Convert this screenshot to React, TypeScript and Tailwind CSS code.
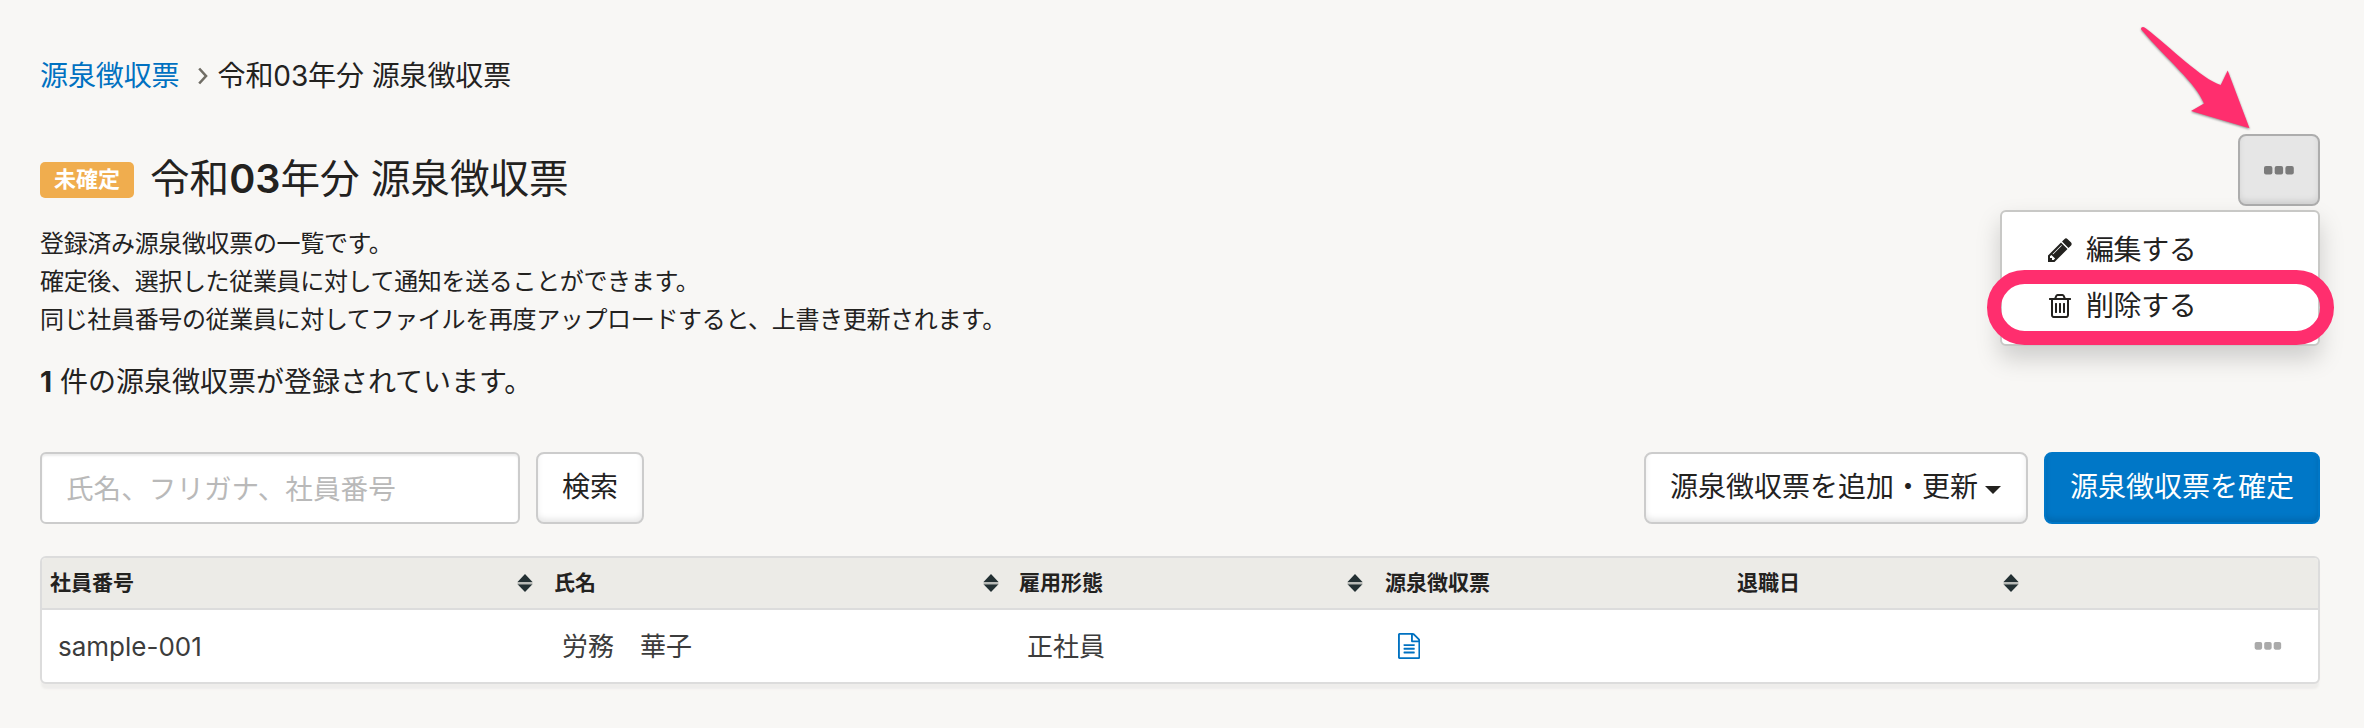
import React from "react";

function Dots({ className }: { className: string }) {
  return (
    <svg viewBox="0 0 30 9" className={className} fill="currentColor" aria-hidden="true">
      <rect x="0" y="0" width="8.4" height="8.6" rx="2" />
      <rect x="10.7" y="0" width="8.4" height="8.6" rx="2" />
      <rect x="21.4" y="0" width="8.4" height="8.6" rx="2" />
    </svg>
  );
}

function PencilIcon() {
  return (
    <svg viewBox="0 128 1536 1536" className="h-6 w-6" fill="currentColor" aria-hidden="true">
      <path d="M363 1536l91-91-235-235-91 91v107h128v128h107zm523-928q0-22-22-22-10 0-17 7L305 1135q-7 7-7 17 0 22 22 22 10 0 17-7l542-542q7-7 7-17zM832 416l416 416-832 832H0v-416zm683 96q0 53-37 90l-166 166-416-416 166-165q36-38 90-38 53 0 91 38l235 234q37 39 37 91z" />
    </svg>
  );
}

function TrashIcon() {
  return (
    <svg viewBox="-64 128 1536 1536" className="h-6 w-6" fill="currentColor" aria-hidden="true">
      <path d="M512 736v576q0 14-9 23t-23 9h-64q-14 0-23-9t-9-23V736q0-14 9-23t23-9h64q14 0 23 9t9 23zm256 0v576q0 14-9 23t-23 9h-64q-14 0-23-9t-9-23V736q0-14 9-23t23-9h64q14 0 23 9t9 23zm256 0v576q0 14-9 23t-23 9h-64q-14 0-23-9t-9-23V736q0-14 9-23t23-9h64q14 0 23 9t9 23zm128 724V512H256v948q0 22 7 40.500t14.500 27 10.500 8.500h832q3 0 10.500-8.500t14.500-27 7-40.500zM480 384h448l-48-117q-7-9-17-11H546q-10 2-17 11zm928 32v64q0 14-9 23t-23 9h-96v948q0 83-47 143.500t-113 60.500H288q-66 0-113-58.500T128 1464V512H32q-14 0-23-9t-9-23v-64q0-14 9-23t23-9h309l70-167q15-37 54-63t79-26h320q40 0 79 26t54 63l70 167h309q14 0 23 9t9 23z" />
    </svg>
  );
}

function FileIcon() {
  return (
    <svg viewBox="0 0 1536 1792" className="h-[26px] w-[22.3px]" fill="currentColor" aria-hidden="true">
      <path d="M1468 380q28 28 48 76t20 88v1152q0 40-28 68t-68 28H96q-40 0-68-28t-28-68V96q0-40 28-68T96 0h896q40 0 88 20t76 48zm-444-244v376h376q-10-29-22-41l-313-313q-12-12-41-22zm384 1528V640H992q-40 0-68-28t-28-68V128H128v1536h1280zM384 800q0-14 9-23t23-9h704q14 0 23 9t9 23v64q0 14-9 23t-23 9H416q-14 0-23-9t-9-23v-64zm736 224q14 0 23 9t9 23v64q0 14-9 23t-23 9H416q-14 0-23-9t-9-23v-64q0-14 9-23t23-9h704zm0 256q14 0 23 9t9 23v64q0 14-9 23t-23 9H416q-14 0-23-9t-9-23v-64q0-14 9-23t23-9h704z" />
    </svg>
  );
}

function SortIcon() {
  return (
    <svg viewBox="0 0 16 18" className="h-[18px] w-4" aria-hidden="true">
      <path d="M8 0L15.500 8H0.500z" fill="#233033" />
      <path d="M8 18L15.500 10.200H0.500z" fill="#233033" />
      <rect x="0.500" y="8" width="15" height="2.200" fill="#b9bbb8" />
    </svg>
  );
}

function HeaderCell({ label, className, sortable = true }: { label: string; className: string; sortable?: boolean }) {
  return (
    <div className={`flex shrink-0 items-center justify-between ${className}`}>
      <span>{label}</span>
      {sortable && <SortIcon />}
    </div>
  );
}

const buttonBase = "flex h-[72px] shrink-0 items-center rounded-[8px] border-2 pb-[2px] text-[28px]";

export default function App() {
  return (
    <div className="relative h-[728px] w-[2364px] overflow-hidden bg-[#f8f7f5] px-[40px] pt-[56px] font-['Inter','Noto_Sans_CJK_JP',sans-serif] font-normal text-[#23221f]">
      <nav className="flex h-10 items-center text-[28px] leading-10 tracking-[-0.1px] whitespace-nowrap">
        <a className="text-[#0071c1]">源泉徴収票</a>
        <svg viewBox="0 0 10 18" className="mr-[10px] ml-[18px] h-[18px] w-[10px]" fill="none" stroke="#706d65" strokeWidth="2.600">
          <path d="M1.200 1.500L8 9l-6.800 7.500" />
        </svg>
        <span>令和03年分 源泉徴収票</span>
      </nav>

      <header className="relative mt-[38px] flex h-[72px] w-[2280px] items-start justify-between">
        <div className="flex items-center pt-[25px]">
          <span className="mt-0.5 mr-4 flex h-9 w-[94px] items-center justify-center rounded-[5px] bg-[#f0ad4e] pb-px text-[22px] font-bold text-white">未確定</span>
          <h1 className="text-[39.6px] leading-10 font-normal whitespace-nowrap">
            令和<span className="font-semibold">03</span>年分 源泉徴収票
          </h1>
        </div>
        <button className="flex h-[72px] w-[82px] items-center justify-center rounded-[8px] border-2 border-[#adadad] bg-[#e6e6e6] text-[#7b7b7b] shadow-[inset_0_-4px_6px_-1px_rgba(0,0,0,0.1)]">
          <Dots className="h-[9px] w-[30px]" />
        </button>
        <div className="absolute top-[76px] right-0 z-10 h-[136px] w-[320px] rounded-[6px] border-2 border-[#c8c8c6] bg-white px-[46px] pt-[10px] text-[28px] tracking-[-0.4px] shadow-[0_12px_24px_rgba(0,0,0,0.175)]">
          <div className="flex h-14 items-center gap-[14px]">
            <PencilIcon />
            <span>編集する</span>
          </div>
          <div className="flex h-14 items-center gap-[14px]">
            <TrashIcon />
            <span>削除する</span>
          </div>
        </div>
      </header>

      <p className="mt-[19px] text-[24px] leading-[38px] tracking-[-0.34px]">
        登録済み源泉徴収票の一覧です。
        <br />
        確定後、選択した従業員に対して通知を送ることができます。
        <br />
        同じ社員番号の従業員に対してファイルを再度アップロードすると、上書き更新されます。
      </p>
      <p className="mt-[24px] text-[28px] leading-[38px]">
        <span className="font-bold">1</span> 件の源泉徴収票が登録されています。
      </p>

      <div className="mt-[51px] flex w-[2280px] items-center">
        <input
          className="h-[72px] w-[480px] rounded-[6px] border-2 border-[#ccc] bg-white px-[24px] pt-[2px] text-[27.6px] shadow-[inset_0_2px_2px_rgba(0,0,0,0.075)] outline-none placeholder:text-[#b9b9b9]"
          placeholder="氏名、フリガナ、社員番号"
        />
        <button className={`${buttonBase} ml-4 w-[108px] justify-center border-[#ccc] bg-white shadow-[inset_0_-4px_6px_-1px_rgba(0,0,0,0.1)]`}>検索</button>
        <button className={`${buttonBase} ml-auto w-[384px] border-[#ccc] bg-white pl-[24px] shadow-[inset_0_-4px_6px_-1px_rgba(0,0,0,0.1)]`}>
          源泉徴収票を追加・更新
          <svg viewBox="0 0 16 8" className="mt-[6px] ml-[7px] h-2 w-4" fill="currentColor">
            <path d="M0 0h16L8 8z" />
          </svg>
        </button>
        <button className={`${buttonBase} ml-4 w-[276px] justify-center border-[#0077c7] bg-[#0077c7] text-white shadow-[inset_0_-4px_6px_-1px_rgba(0,0,0,0.13)]`}>源泉徴収票を確定</button>
      </div>

      <section className="mt-8 w-[2280px] overflow-visible rounded-[6px] border-2 border-[#dcdcdc] bg-white shadow-[0_6px_2px_-1px_#eeedeb]">
        <div className="flex h-[52px] items-center rounded-t-[4px] border-b-2 border-[#dcdcdc] bg-[#ecebe7] pb-px pl-2 text-[21px] font-bold">
          <HeaderCell label="社員番号" className="w-[483px]" />
          <HeaderCell label="氏名" className="ml-[21px] w-[445px]" />
          <HeaderCell label="雇用形態" className="ml-[20px] w-[344px]" />
          <HeaderCell label="源泉徴収票" className="ml-[22px] w-[330px]" sortable={false} />
          <HeaderCell label="退職日" className="ml-[22px] w-[282px]" />
        </div>
        <div className="flex h-[72px] items-center pl-4 text-[26px] text-[#3c3c3c]">
          <span className="w-[504px]">sample-001</span>
          <span className="w-[465px]">労務　華子</span>
          <span className="w-[371px]">正社員</span>
          <span className="text-[#0071c1]">
            <FileIcon />
          </span>
          <span className="mr-[36px] ml-auto text-[#aaa]">
            <Dots className="h-[8px] w-[28px]" />
          </span>
        </div>
      </section>

      <div className="absolute top-[270px] left-[1987px] z-20 h-[75px] w-[347px] rounded-full border-[14px] border-[#ff2e6e]" />
      <svg viewBox="0 0 130 120" className="absolute top-[20px] left-[2130px] z-20 h-[120px] w-[130px] drop-shadow-[0_1px_1px_rgba(0,0,0,0.45)]" aria-hidden="true">
        <path d="M11.200 9.500Q10.500 7.200 13 7Q14.500 7 16 8.500C40 27 72 59 90.700 65L97.700 50.500L119.500 108.300L61 91L74 83.500C66 63 38 41 11.200 9.500Z" fill="#ff2e6e" />
      </svg>
    </div>
  );
}
